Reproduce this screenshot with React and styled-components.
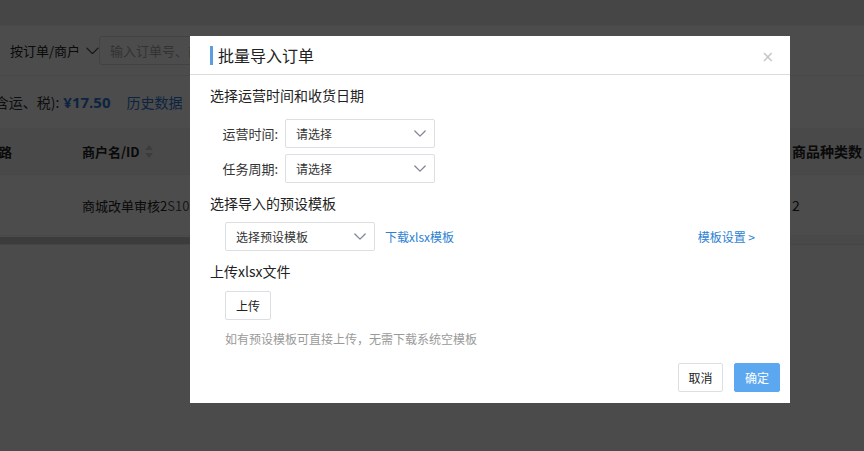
import React from "react";
import styled, { createGlobalStyle } from "styled-components";

const GlobalStyle = createGlobalStyle`
  html, body { margin: 0; padding: 0; }
  body {
    font-family: "Noto Sans CJK SC", "Microsoft YaHei", sans-serif;
    color: #333;
    background: #fff;
  }
  * { box-sizing: border-box; }
`;

const Page = styled.div`
  position: relative;
  width: 864px;
  height: 451px;
  overflow: hidden;
  background: #fafafa;
`;

const TopBar = styled.div`
  height: 26px;
  background: #ececec;
  border-bottom: 1px solid #f4f4f4;
`;

const FilterRow = styled.div`
  height: 50px;
  display: flex;
  align-items: center;
  padding-left: 10px;
  background: #fff;
  border-bottom: 1px solid #f0f0f0;
`;

const FilterSelect = styled.div`
  display: flex;
  align-items: center;
  gap: 6px;
  font-size: 13px;
  color: #222;
  width: 89px;
  white-space: nowrap;
  flex: none;
`;

const FilterInput = styled.div`
  height: 29px;
  width: 240px;
  border: 1px solid #dcdee2;
  border-radius: 3px;
  display: flex;
  align-items: center;
  padding-left: 10px;
  font-size: 13px;
  color: #a8a8a8;
  white-space: nowrap;
`;

const SummaryRow = styled.div`
  height: 52px;
  display: flex;
  align-items: center;
  background: #fff;
  font-size: 14px;
  color: #333;
  white-space: nowrap;
`;

const SummaryLabel = styled.span`
  margin-left: -10px;
`;

const Amount = styled.span`
  margin-left: 4px;
  font-weight: 700;
  font-size: 15px;
  color: #2d7ad6;
  font-family: "Open Sans", "Noto Sans CJK SC", sans-serif;
`;

const HistoryLink = styled.span`
  margin-left: 16px;
  color: #2d7ad6;
`;

const TableRow = styled.div`
  display: flex;
  align-items: center;
  height: ${(p) => p.$h}px;
  background: ${(p) => (p.$head ? "#f3f4f6" : "#fff")};
  border-bottom: 1px solid #eef0f2;
  font-size: 13px;
  font-weight: ${(p) => (p.$head ? 700 : 400)};
  color: #222;
  white-space: nowrap;
`;

const Cell = styled.div`
  flex: ${(p) => (p.$grow ? "1" : "none")};
  width: ${(p) => (p.$w ? `${p.$w}px` : "auto")};
  font-size: ${(p) => p.$fs || 13}px;
  display: flex;
  align-items: center;
  gap: 5px;
  overflow: hidden;
`;

const FirstCell = styled(Cell)`
  margin-left: -14px;
  width: 96px;
`;

const Muted = styled.span`
  color: #555;
`;

const ScrollTrack = styled.div`
  height: 8px;
  margin-top: 1px;
  background: #f6f6f6;
  border-bottom: 1px solid #e6e6e6;
`;

const ScrollThumb = styled.div`
  height: 100%;
  width: 620px;
  background: #c8c8c8;
`;

const Overlay = styled.div`
  position: absolute;
  inset: 0;
  background: rgba(0, 0, 0, 0.7);
`;

const Modal = styled.div`
  position: absolute;
  left: 190px;
  top: 36px;
  width: 600px;
  height: 367px;
  background: #fff;
  display: flex;
  flex-direction: column;
`;

const ModalHeader = styled.div`
  height: 39px;
  flex: none;
  display: flex;
  align-items: center;
  justify-content: space-between;
  padding: 0 16px 0 20px;
  border-bottom: 1px solid #dcdcdc;
`;

const Title = styled.div`
  border-left: 3px solid #5b9ee0;
  padding-left: 5px;
  font-size: 16px;
  line-height: 19px;
  color: #222;
`;

const Close = styled.span`
  font-size: 15px;
  color: #c4c4c4;
  font-family: "DejaVu Sans", sans-serif;
  margin-top: 3px;
`;

const ModalBody = styled.div`
  flex: 1;
  padding: 0 20px;
  display: flex;
  flex-direction: column;
`;

const SectionTitle = styled.div`
  font-size: 14px;
  line-height: 20px;
  margin-top: ${(p) => p.$mt}px;
  color: #222;
`;

const FormRow = styled.div`
  display: flex;
  align-items: center;
  margin-top: ${(p) => p.$mt}px;
  padding-left: ${(p) => p.$pl || 0}px;
  gap: ${(p) => p.$gap || 0}px;
`;

const Label = styled.div`
  width: 68px;
  text-align: right;
  font-size: 13px;
  color: #333;
  margin-right: 7px;
`;

const Select = styled.div`
  width: 150px;
  height: 29px;
  border: 1px solid #dcdee2;
  border-radius: 2px;
  display: flex;
  align-items: center;
  justify-content: space-between;
  padding: 0 8px 0 10px;
  font-size: 12px;
  color: #333;
`;

const Link = styled.span`
  font-size: 12px;
  color: #2d7fd4;
  margin-left: ${(p) => (p.$push ? "auto" : "0")};
  margin-right: ${(p) => (p.$push ? "15px" : "0")};
`;

const Button = styled.div`
  height: 29px;
  width: ${(p) => p.$w || 46}px;
  display: flex;
  align-items: center;
  justify-content: center;
  font-size: 12px;
  border-radius: 2px;
  border: 1px solid ${(p) => (p.$primary ? "#5ca8f0" : "#dcdee2")};
  background: ${(p) => (p.$primary ? "#5ca8f0" : "#fff")};
  color: ${(p) => (p.$primary ? "#fff" : "#222")};
`;

const Hint = styled.div`
  margin-top: 10px;
  padding-left: 15px;
  font-size: 12px;
  line-height: 18px;
  color: #9a9a9a;
`;

const Footer = styled.div`
  display: flex;
  justify-content: flex-end;
  gap: 11px;
  padding: 0 10px 11px 0;
`;

const Chevron = ({ size = 12, color = "#808695" }) => (
  <svg width={size} height={size * 0.6} viewBox="0 0 14 8" fill="none">
    <polyline points="1,1 7,7 13,1" stroke={color} strokeWidth="1.5" strokeLinecap="round" strokeLinejoin="round" />
  </svg>
);

const SortIcon = () => (
  <svg width="8" height="13" viewBox="0 0 8 13">
    <polygon points="4,0 8,5 0,5" fill="#c5c8ce" />
    <polygon points="0,8 8,8 4,13" fill="#c5c8ce" />
  </svg>
);

export default function App() {
  return (
    <>
      <GlobalStyle />
      <Page>
        <TopBar />
        <FilterRow>
          <FilterSelect>
            按订单/商户 <Chevron size={13} color="#555" />
          </FilterSelect>
          <FilterInput>输入订单号、商户名</FilterInput>
        </FilterRow>
        <SummaryRow>
          <SummaryLabel>(含运、税):</SummaryLabel>
          <Amount>¥17.50</Amount>
          <HistoryLink>历史数据</HistoryLink>
        </SummaryRow>
        <TableRow $head $h={47}>
          <FirstCell>线路</FirstCell>
          <Cell $grow>
            商户名/ID <SortIcon />
          </Cell>
          <Cell $w={72} $fs={14}>商品种类数</Cell>
        </TableRow>
        <TableRow $h={61}>
          <FirstCell />
          <Cell $grow>
            <span>
              商城改单审核2<Muted>S1036</Muted>
            </span>
          </Cell>
          <Cell $w={72} $fs={14}>2</Cell>
        </TableRow>
        <ScrollTrack>
          <ScrollThumb />
        </ScrollTrack>
        <Overlay />
        <Modal>
          <ModalHeader>
            <Title>批量导入订单</Title>
            <Close>×</Close>
          </ModalHeader>
          <ModalBody>
            <SectionTitle $mt={10}>选择运营时间和收货日期</SectionTitle>
            <FormRow $mt={14}>
              <Label>运营时间:</Label>
              <Select>
                请选择 <Chevron />
              </Select>
            </FormRow>
            <FormRow $mt={6}>
              <Label>任务周期:</Label>
              <Select>
                请选择 <Chevron />
              </Select>
            </FormRow>
            <SectionTitle $mt={10}>选择导入的预设模板</SectionTitle>
            <FormRow $mt={9} $pl={15} $gap={10}>
              <Select>
                选择预设模板 <Chevron />
              </Select>
              <Link>下载xlsx模板</Link>
              <Link $push>模板设置 &gt;</Link>
            </FormRow>
            <SectionTitle $mt={10}>上传xlsx文件</SectionTitle>
            <FormRow $mt={10} $pl={15}>
              <Button>上传</Button>
            </FormRow>
            <Hint>如有预设模板可直接上传，无需下载系统空模板</Hint>
          </ModalBody>
          <Footer>
            <Button $w={45}>取消</Button>
            <Button $primary>确定</Button>
          </Footer>
        </Modal>
      </Page>
    </>
  );
}
